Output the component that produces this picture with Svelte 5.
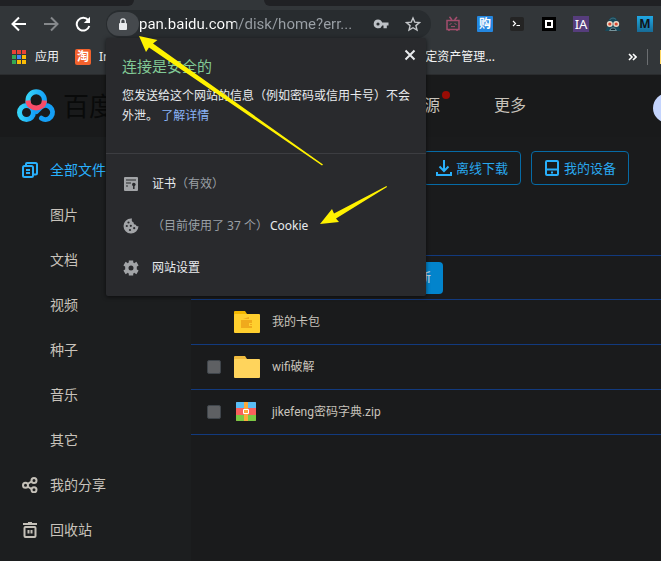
<script>
  const categories = ['图片', '文档', '视频', '种子', '音乐', '其它'];
  const dots = ['#ea4335', '#ea4335', '#ea4335', '#34a853', '#4285f4', '#fbbc05', '#34a853', '#fbbc05', '#fbbc05'];
  const files = [
    { name: '我的卡包', kind: 'card' },
    { name: 'wifi破解', kind: 'folder' },
    { name: 'jikefeng密码字典.zip', kind: 'zip' }
  ];
  let address = $state('pan.baidu.com/disk/home?err...');
</script>

<div class="window">
  <div class="tabs"><div class="tab"></div></div>

  <div class="toolbar">
    <button class="tool" aria-label="后退">
      <svg width="16" height="16" viewBox="0 0 16 16" fill="none" stroke="#fff" stroke-width="2"><path d="M15 8H2M8 1.500 1.500 8 8 14.500" /></svg>
    </button>
    <button class="tool" aria-label="前进">
      <svg width="16" height="16" viewBox="0 0 16 16" fill="none" stroke="#85888b" stroke-width="2"><path d="M1 8h13M8 1.500 14.500 8 8 14.500" /></svg>
    </button>
    <button class="tool" aria-label="重新加载">
      <svg width="16" height="16" viewBox="0 0 16 16"><path d="M13.200 4.200A6.400 6.400 0 1 0 14.300 10" fill="none" stroke="#fff" stroke-width="2" /><path d="M15 .8V7H8.800z" fill="#fff" /></svg>
    </button>
    <div class="omnibox">
      <button class="lock" aria-label="查看网站信息">
        <svg width="10" height="13" viewBox="0 0 10 13"><rect x="1" y="5" width="8" height="7" rx="1" fill="#e8eaed" /><path d="M2.700 5.500V3.200a2.300 2.300 0 0 1 4.600 0v2.300" fill="none" stroke="#e8eaed" stroke-width="1.300" /></svg>
      </button>
      <input class="url" aria-label="地址" bind:value={address} />
      <button class="inner" aria-label="密码">
        <svg width="16" height="12" viewBox="0 0 16 12" fill="#bdc1c6"><path fill-rule="evenodd" d="M5 1.500a4.400 4.400 0 1 0 4.200 6H10.500v2.800h3.300V7.500H15.500V4.500H9.200A4.500 4.500 0 0 0 5 1.500zM5 4.400a1.600 1.600 0 1 1 0 3.200 1.600 1.600 0 0 1 0-3.200z" /></svg>
      </button>
      <button class="inner" aria-label="加入书签">
        <svg width="16" height="16" viewBox="0 0 16 16" fill="none" stroke="#c4c7ca" stroke-width="1.400"><path d="m8 2 1.800 4.200 4.600.4-3.500 3 1.100 4.500L8 11.700l-4 2.400 1.100-4.500-3.500-3 4.600-.4z" /></svg>
      </button>
    </div>
    <div class="extensions">
      <button class="tool" aria-label="视频助手">
        <svg width="16" height="16" viewBox="0 0 16 16" fill="none" stroke="#a34d6d"><path d="m4.500.8 2.300 3M12 1 9.600 3.800M2 4.500h12v9H2zM4 13.500V15M12 13.500V15" stroke-width="1.500" /><path d="m4.500 8.500 2-1M9.500 7.500l2 1M6 11l1-.8 1 .8 1-.8 1 .8" /></svg>
      </button>
      <button class="tool"><span class="badge buy">购</span></button>
      <button class="tool" aria-label="终端">
        <svg width="14" height="14" viewBox="0 0 14 14"><rect width="14" height="14" rx="2" fill="#242424" /><path d="m3 4 2.500 2.500L3 9M6.500 8.500H10" fill="none" stroke="#fff" stroke-width="1.200" /></svg>
      </button>
      <button class="tool" aria-label="方块">
        <svg width="14" height="14" viewBox="0 0 14 14"><path fill="#000" d="M0 0h14v14H0z" /><path fill="#fff" d="M3 3h8v8H3z" /><path fill="#000" d="M5 5h4v4H5z" /></svg>
      </button>
      <button class="tool"><span class="badge ia">IA</span></button>
      <button class="tool" aria-label="油猴">
        <svg width="16" height="16" viewBox="0 0 16 16"><path d="M0 15c1.500-2 2-4 2.500-7C3.500 2.500 6 1 8 1s4.500 1.500 5.500 7c.5 3 1 5 2.500 7z" fill="#17495a" /><path d="M4.500 4C6 2 9 1.500 11 3.500" stroke="#477180" fill="none" /><circle cx="4.800" cy="8" r="3" fill="#ead9c8" /><circle cx="11.200" cy="8" r="3" fill="#ead9c8" /><circle cx="4.800" cy="8" r="1.600" fill="#d74831" /><circle cx="11.200" cy="8" r="1.600" fill="#d74831" /><path d="M4.500 14.500 6.500 12h3l2 2.500z" fill="#10232b" stroke="#75929a" /></svg>
      </button>
      <button class="tool"><span class="badge em">M</span></button>
    </div>
  </div>

  <nav class="bookmarks">
    <a class="apps" href="#apps">
      <span class="dots">{#each dots as color}<i style:background={color}></i>{/each}</span>应用
    </a>
    <a class="taobao" href="#taobao"><span class="tao">淘</span>In</a>
    <a class="assets" href="#assets">固定资产管理...</a>
    <button class="more" aria-label="更多书签">
      <svg width="9" height="8" viewBox="0 0 9 8" fill="none" stroke="#fff" stroke-width="1.600"><path d="m1 1 3 3-3 3M5 1l3 3-3 3" /></svg>
    </button>
    <span class="split"></span>
    <span class="other"></span>
  </nav>

  <header>
    <a class="brand" href="#home">
      <svg width="40" height="34" viewBox="0 0 40 34" fill="none" stroke-width="5">
        <defs>
          <linearGradient id="blue" x1="0" x2="1"><stop stop-color="#35d3f8" /><stop offset="1" stop-color="#16a3f8" /></linearGradient>
        </defs>
        <circle cx="10.500" cy="23.500" r="7" stroke="url(#blue)" />
        <path d="M25.500 29.200A7 7 0 1 0 24.500 18.500L20.500 22.500" stroke="#159ff5" stroke-linecap="round" />
        <path d="M12 14V11a8.200 8.200 0 0 1 16.400 0v3" stroke="url(#blue)" />
        <path d="M12 11.500c.7 10 15.700 10 16.400 0" stroke="#fa4c68" />
      </svg>
      <span>百度网盘</span>
    </a>
    <div class="topnav">
      <a class="resource" href="#resource">找资源<i></i></a>
      <a href="#more">更多</a>
    </div>
    <button class="avatar" aria-label="账号"></button>
  </header>

  <div class="body">
    <aside>
      <a class="active" href="#all">
        <svg width="16" height="16" viewBox="0 0 16 16" fill="none" stroke="#29b0fb" stroke-width="2"><rect x="1" y="4" width="10" height="11" rx="1.500" /><path d="M4 3V2q0-1 1-1h8.500q1.500 0 1.500 1.500V11q0 1.500-1.500 1.500H12M4 8h4M4 11h4" /></svg>
        全部文件
      </a>
      {#each categories as name}
        <a class="sub" href="#{name}">{name}</a>
      {/each}
      <a href="#share">
        <svg width="16" height="16" viewBox="0 0 16 16" fill="none" stroke="#c4c0b8" stroke-width="2"><path d="m5.500 7 4-2.500M5.500 9.500l4 2.500" /><circle cx="3.500" cy="8.200" r="2.500" /><circle cx="12" cy="3.500" r="2.500" /><circle cx="12" cy="12.800" r="2.500" /></svg>
        我的分享
      </a>
      <a href="#trash">
        <svg width="16" height="16" viewBox="0 0 16 16" fill="none" stroke="#c4c0b8" stroke-width="2"><path d="M1 2h14M6 1h4M6.500 8v3.500M9.500 8v3.500" /><rect x="2.500" y="5" width="11" height="10" rx="1" /></svg>
        回收站
      </a>
    </aside>

    <main>
      <div class="actions">
        <button>
          <svg width="16" height="16" viewBox="0 0 16 16" fill="none" stroke="#29b0fb" stroke-width="2"><path d="M8 0v10M3.500 6.500 8 11l4.500-4.500M1 12v3h14v-3" /></svg>
          离线下载
        </button>
        <button>
          <svg width="16" height="16" viewBox="0 0 16 16" fill="none" stroke="#29b0fb" stroke-width="2"><rect x="2" y="1" width="12" height="14" rx="1" /><path d="M2 9.500h12M7 12.500h2" /></svg>
          我的设备
        </button>
      </div>
      <div class="notice"><button>刷新</button></div>
      <table>
        <tbody>
          {#each files as file}
            <tr>
              <td class="check">
                {#if file.kind !== 'card'}<input type="checkbox" aria-label={file.name} />{/if}
              </td>
              <td class="icon">
                {#if file.kind === 'zip'}
                  <svg width="26" height="22" viewBox="0 0 26 22"><rect x="2" y="1" width="20" height="19" rx="1" fill="#f9605c" /><path fill="#58bdf5" d="M2 7V2q0-1 1-1h18q1 0 1 1v5z" /><path fill="#7ac943" d="M2 14h20v5q0 1-1 1H3q-1 0-1-1z" /><path fill="#fba93c" d="M10 1h4v19h-4z" /><path d="M9.500 8.500h5v4h-5z" fill="#fba93c" stroke="#fff" /></svg>
                {:else}
                  <svg width="26" height="22" viewBox="0 0 26 22">
                    <path fill={file.kind === 'card' ? '#f3b800' : '#f0bb3e'} d="M0 6V1q0-1 1-1h10l2 3v3z" />
                    <rect y="3" width="26" height="19" rx="1" fill={file.kind === 'card' ? '#ffcf2e' : '#ffd45c'} />
                    {#if file.kind === 'card'}<path fill="#f0aa1c" d="M7 9h11v3h-3v3h3v2H7zM9 8l6-2v2zM16 13h2v1h-2z" />{/if}
                  </svg>
                {/if}
              </td>
              <td>{file.name}</td>
            </tr>
          {/each}
        </tbody>
      </table>
    </main>
  </div>

  <section class="popup">
    <button class="close" aria-label="关闭">
      <svg width="12" height="12" viewBox="0 0 12 12" stroke="#e8eaed" stroke-width="2"><path d="m1.500 1.500 9 9M10.500 1.500l-9 9" /></svg>
    </button>
    <div class="summary">
      <h1>连接是安全的</h1>
      <p>您发送给这个网站的信息（例如密码或信用卡号）不会外泄。 <a href="#details">了解详情</a></p>
    </div>
    <ul>
      <li>
        <svg width="16" height="16" viewBox="0 0 16 16"><rect x="1" y="1" width="14" height="14" rx="1" fill="#a2a4a7" /><path d="M3 4h10M3 7h5M3 10h2" stroke="#292a2d" stroke-width="1.200" /><circle cx="10.800" cy="8.500" r="1.800" fill="#292a2d" /><path d="M10.800 9v4" stroke="#292a2d" stroke-width="1.500" /></svg>
        <span>证书</span><em>（有效）</em>
      </li>
      <li>
        <svg width="16" height="16" viewBox="0 0 16 16"><path d="M8 .5a7.500 7.500 0 1 0 7.500 7.800c-1.500.3-2.400-.4-2.500-1.600-1.600.2-2.600-.8-2.300-2.200C9 4.300 8.300 2.500 9 .6z" fill="#a2a4a7" /><g fill="#292a2d"><circle cx="5.500" cy="4.500" r="1.100" /><circle cx="3.800" cy="8" r="1.100" /><circle cx="7.800" cy="7.800" r="1.100" /><circle cx="7" cy="12" r="1.100" /><circle cx="11.200" cy="10.200" r="1.100" /></g></svg>
        <em>（目前使用了 37 个）</em><span class="cookie">Cookie</span>
      </li>
      <li>
        <svg width="16" height="16" viewBox="0 0 16 16"><path d="M5.800.5h4.400v2.700h-4.400zM5.800 12.800h4.400v2.700h-4.400zM.4 5.600l2.200-3.800 2.300 1.400-2.200 3.800zM11.100 12.800l2.200-3.800 2.300 1.400-2.200 3.800zM2.600 14.200.4 10.400 2.700 9l2.200 3.800zM13.300 7l-2.200-3.800 2.300-1.400 2.200 3.800z" fill="#a2a4a7" /><circle cx="8" cy="8" r="4.200" fill="none" stroke="#a2a4a7" stroke-width="3.400" /></svg>
        <span>网站设置</span>
      </li>
    </ul>
  </section>

  <svg class="arrows" width="400" height="230" viewBox="0 0 400 230" fill="#fff200">
    <path d="m139 36 18.500 4-4.500 3.500 170 121-1 1-173-118-3 4.500z" />
    <path d="m320 224 12-15 2 4.500 52.500-27.500.5 1-51 31.500 3 3.500z" />
  </svg>
</div>

<style>
  :global(body) { margin: 0; background: #1a1b1c; }
  .window {
    position: relative;
    display: flex;
    flex-direction: column;
    min-height: 100vh;
    overflow: hidden;
    font: 12px/20px "Noto Sans", "Noto Sans CJK SC", sans-serif;
    color: #c8c3bb;
  }
  button { padding: 0; border: 0; background: none; color: inherit; font: inherit; }
  a { color: inherit; text-decoration: none; }
  svg { display: block; flex: none; }

  .tabs { height: 6px; background: #323639; display: flex; justify-content: space-between; }
  .tabs::before { content: ""; width: 134px; background: #202124; border-bottom-right-radius: 6px; }
  .tabs::after { content: ""; flex: 1; background: #202124; border-bottom-left-radius: 6px; }
  .tab { width: 130px; }

  .toolbar { display: flex; align-items: center; height: 36px; padding-left: 3px; background: #323639; }
  .tool { display: flex; flex: none; align-items: center; justify-content: center; width: 32px; height: 28px; }
  .omnibox {
    display: flex; flex: 1; align-items: center; min-width: 0; height: 28px;
    margin: 0 6px 0 7px; border-radius: 14px; background: #282c2f;
  }
  .lock { display: flex; flex: none; align-items: center; justify-content: center; width: 32px; height: 24px; margin-left: 1px; border-radius: 12px; background: #45494d; }
  .url {
    flex: 1; min-width: 0; height: 24px; padding: 0; border: 0; outline: 0;
    font: 15px/24px Roboto, sans-serif; color: transparent;
    background: linear-gradient(90deg, #fff 97px, #9aa0a6 97px);
    -webkit-background-clip: text; background-clip: text;
  }
  .inner { display: flex; flex: none; align-items: center; justify-content: center; width: 32px; height: 24px; }
  .inner:last-child { margin-right: 2px; }
  .extensions { display: flex; }
  .badge { width: 16px; height: 16px; font-size: 12px; line-height: 16px; text-align: center; }
  .buy { background: #2487e0; color: #fff; font-weight: 700; border-radius: 1px; }
  .ia { background: #563d7c; color: #fff; font-size: 13px; }
  .em { background: linear-gradient(#20a8e5, #176b96); color: #10151a; font-weight: 700; }

  .bookmarks { display: flex; align-items: center; height: 30px; padding: 0 0 2px 12px; background: #323639; border-bottom: 1px solid #2a2c2e; color: #f1f3f4; }
  .bookmarks a { display: flex; align-items: center; flex: none; }
  .apps { gap: 9px; }
  .dots { display: grid; grid-template-columns: repeat(3, 4px); gap: 1px; }
  .dots i { height: 4px; }
  .taobao { gap: 8px; margin-left: 16px; }
  .tao { width: 16px; height: 16px; border-radius: 2px; background: #f3622d; color: #fff; font-weight: 700; line-height: 16px; text-align: center; }
  .bookmarks .assets { margin-left: auto; }
  .more { margin: 0 10px 0 133px; }
  .split { width: 1px; height: 16px; background: #6b6e71; }
  .other { width: 1px; height: 14px; margin-left: 12px; background: #fdd663; }

  header { display: flex; align-items: center; height: 62px; padding-left: 16px; overflow: hidden; background: #191a1b; }
  .brand { display: flex; align-items: center; gap: 7px; color: #090a0a; font-size: 26px; line-height: 32px; }
  .topnav { display: flex; gap: 54px; margin-left: auto; padding-bottom: 2px; font-size: 16px; }
  .resource { position: relative; }
  .resource i { position: absolute; top: -4px; right: -10px; width: 8px; height: 8px; border-radius: 50%; background: #990c05; }
  .avatar { flex: none; width: 30px; height: 30px; margin: 4px -22px 0 127px; border-radius: 50%; background: #c4d4fd; }

  .body { display: flex; flex: 1; }
  aside { flex: none; width: 191px; padding-top: 10px; background: #1c1e1f; }
  aside a { display: flex; align-items: center; gap: 12px; height: 45px; padding-left: 22px; font-size: 14px; }
  aside .active { color: #29b0fb; }
  aside .sub { padding-left: 50px; }
  main { flex: 1; min-width: 0; padding-top: 14px; }
  .actions { display: flex; justify-content: flex-end; gap: 10px; padding-right: 32px; }
  .actions button { display: flex; align-items: center; justify-content: center; gap: 4px; width: 98px; height: 34px; border: 1px solid #066ba6; border-radius: 4px; color: #29a8ee; font-size: 13px; }
  .notice { display: flex; align-items: center; height: 43px; margin-top: 70px; border: solid #123a7e; border-width: 1px 0; }
  .notice button { height: 32px; margin-left: 204px; padding: 0 12px; border-radius: 4px; background: #0284cc; color: #e8e6e3; }
  table { width: 100%; border-collapse: separate; border-spacing: 0; font-family: Roboto, "Noto Sans CJK SC", sans-serif; }
  td { height: 44px; padding: 0; border-bottom: 1px solid #123a7e; }
  .check { width: 43px; }
  .check input { display: block; appearance: none; width: 14px; height: 14px; margin: 0 0 0 16px; border: 1px solid #3f454b; border-radius: 2px; background: #5e6063; }
  .icon { width: 38px; }

  .popup { position: absolute; top: 38px; left: 106px; width: 320px; border-radius: 2px; background: #292a2d; box-shadow: 0 1px 4px #0009; color: #e8eaed; }
  .close { position: absolute; top: 11px; right: 10px; }
  .summary { padding: 18px 14px 27px 16px; border-bottom: 1px solid #3c3d41; }
  h1 { margin: 0 0 10px; color: #81c995; font-size: 15px; font-weight: 400; line-height: 20px; }
  p { margin: 0; }
  p a { color: #8ab4f8; }
  ul { margin: 0; padding: 9px 0 7px; list-style: none; }
  li { display: flex; align-items: center; height: 42px; padding-left: 17px; }
  li svg { margin-right: 13px; }
  .cookie { margin-left: 2px; }
  em { color: #9aa0a6; font-style: normal; }
  .arrows { position: absolute; top: 0; left: 0; pointer-events: none; }
</style>
